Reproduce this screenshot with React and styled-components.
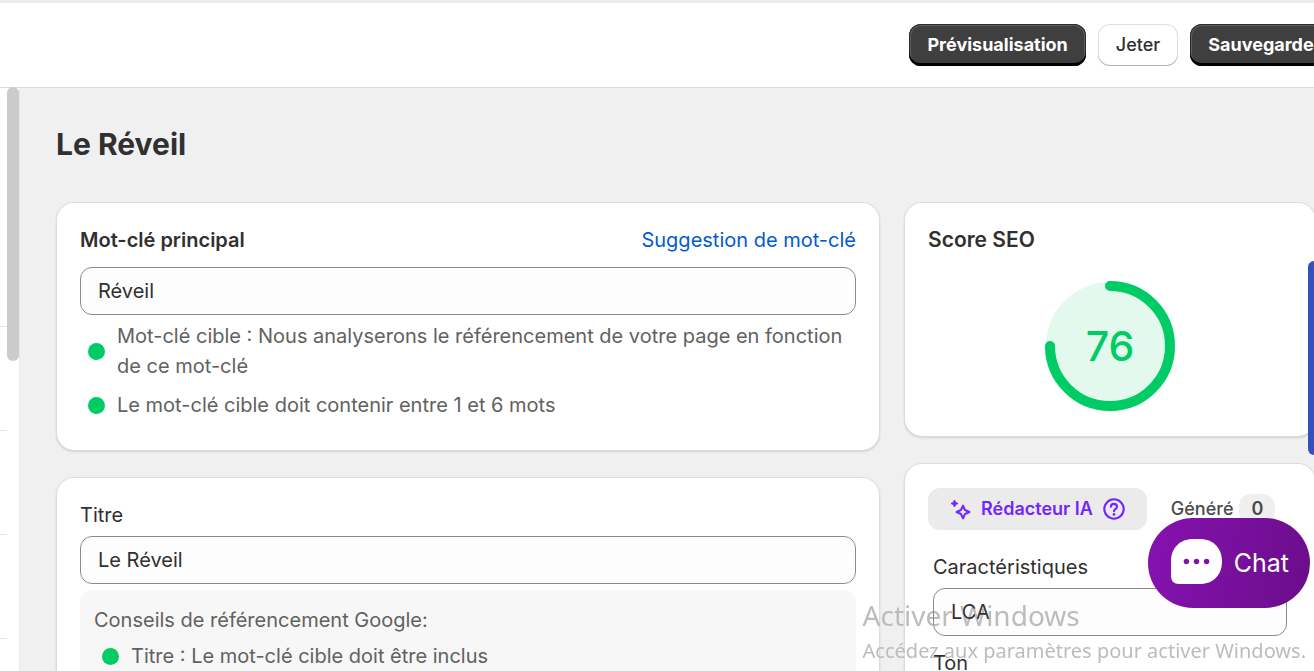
import React from 'react';
import styled, { createGlobalStyle } from 'styled-components';

const GlobalStyle = createGlobalStyle`
  * {
    box-sizing: border-box;
  }
  body {
    margin: 0;
    overflow: hidden;
    background: #f0f0f0;
    color: #303030;
    font-family: Inter, sans-serif;
    font-size: 20px;
    line-height: 30px;
  }
  button, input {
    font: inherit;
    color: inherit;
  }
  h1, h2, ul {
    margin: 0;
    padding: 0;
  }
`;

const Page = styled.div`
  display: flex;
  flex-direction: column;
  height: 100vh;
  overflow: hidden;
`;

const Header = styled.header`
  display: flex;
  flex-shrink: 0;
  justify-content: flex-end;
  gap: 12px;
  height: 88px;
  margin-right: -25px;
  padding: 21px 0;
  background: white;
  border-top: 3px solid #ebebeb;
  border-bottom: 1px solid #dcdcdc;
`;

const HeaderButton = styled.button`
  height: 42px;
  padding: 0 18px;
  border: 0;
  border-radius: 12px;
  font-size: 18px;
  line-height: 24px;
  white-space: nowrap;
  cursor: pointer;
  font-weight: ${props => (props.$primary ? 700 : 500)};
  color: ${props => (props.$primary ? 'white' : '#303030')};
  background: ${props => (props.$primary ? '#3f3f3f' : 'white')};
  box-shadow: ${props => (props.$primary
    ? 'inset 0 -3px 0 #000, inset 0 0 0 1px #2c2c2c, inset 0 0 0 2px #5c5c5c'
    : 'inset 0 -1px 0 #b5b5b5, inset 0 0 0 1px #dedede')};
`;

const Body = styled.div`
  display: flex;
  flex: 1;
  min-height: 0;
`;

const SideNav = styled.nav`
  display: flex;
  flex-shrink: 0;
  width: 19px;
  background: white;
`;

const SideItems = styled.div`
  flex: 1;
`;

const SideItem = styled.div`
  height: ${props => (props.$tall ? 239 : 104)}px;
  border-bottom: 1px solid #e6e6e6;
`;

const ScrollThumb = styled.div`
  width: 12px;
  height: 274px;
  margin-top: -1px;
  border-radius: 6px;
  background: #cbcbcb;
`;

const Main = styled.main`
  flex: 1;
  min-width: 0;
  margin-right: -2px;
  padding: 36px 0 0 36px;
  border-left: 1px solid #e8e8e8;
`;

const PageTitle = styled.h1`
  margin-bottom: 38px;
  font-size: 30px;
  line-height: 40px;
  font-weight: 700;
`;

const Columns = styled.div`
  display: grid;
  grid-template-columns: 2fr 1fr;
  gap: 24px;
`;

const Column = styled.div`
  display: flex;
  flex-direction: column;
  gap: 26px;
  min-width: 0;
`;

const Card = styled.section`
  padding: 23px 24px 26px;
  border-radius: 18px;
  background: white;
  box-shadow: inset 0 0 0 1px #dcdcdc, inset 0 -1px 0 #bdbdbd, 0 1px 2px rgba(0, 0, 0, 0.12);
`;

const CardHead = styled.div`
  display: flex;
  justify-content: space-between;
  margin-bottom: 12px;
`;

const CardTitle = styled.h2`
  font-size: 21px;
  line-height: 30px;
  font-weight: 600;
`;

const FieldTitle = styled.label`
  font-weight: 600;
`;

const SuggestLink = styled.a`
  color: #005bd3;
  text-decoration: none;
`;

const Label = styled.label`
  display: block;
  margin-bottom: 6px;
`;

const TextInput = styled.input`
  display: block;
  width: 100%;
  height: 48px;
  padding: 0 17px;
  border: 1px solid #8a8a8a;
  border-radius: 12px;
  background: #fdfdfd;
`;

const HintList = styled.ul`
  display: flex;
  flex-direction: column;
  gap: 9px;
  margin-top: 6px;
  padding: 0 8px 5px;
  list-style: none;
`;

const HintItem = styled.li`
  display: flex;
  align-items: center;
  gap: 12px;
  color: #616161;
`;

const Bullet = styled.span`
  flex-shrink: 0;
  width: 17px;
  height: 17px;
  border-radius: 50%;
  background: #00cc66;
`;

const Tips = styled.div`
  margin-top: 6px;
  padding: 15px 14px;
  border-radius: 12px;
  background: #f7f7f7;
  color: #616161;
`;

const ScoreWrap = styled.div`
  display: flex;
  justify-content: center;
  padding-top: 14px;
`;

const Ring = styled.svg`
  display: block;
`;

const AiRow = styled.div`
  display: flex;
  align-items: center;
  margin: 2px 0 22px;
`;

const AiButton = styled.button`
  display: flex;
  align-items: center;
  height: 42px;
  padding: 0 22px;
  border: 0;
  border-radius: 12px;
  background: #ebebeb;
  color: #7126ff;
  font-size: 18px;
  font-weight: 600;
  white-space: nowrap;
  cursor: pointer;
  & > svg:first-child {
    margin-right: 9px;
  }
  & > svg:last-child {
    margin-left: 10px;
  }
`;

const Generated = styled.div`
  display: flex;
  align-items: center;
  gap: 6px;
  margin-left: 24px;
  color: #4a4a4a;
  font-size: 18px;
  font-weight: 500;
`;

const Count = styled.span`
  padding: 0 12px;
  border-radius: 12px;
  background: #efefef;
  font-weight: 600;
`;

const Fields = styled.div`
  display: flex;
  flex-direction: column;
  gap: 12px;
  padding: 0 5px;
`;

const SideTab = styled.div`
  position: fixed;
  top: 261px;
  right: 0;
  width: 6px;
  height: 194px;
  border-radius: 8px 0 0 8px;
  background: #3350bd;
`;

const ChatButton = styled.button`
  position: fixed;
  right: 4px;
  bottom: 63px;
  display: flex;
  align-items: center;
  gap: 12px;
  height: 90px;
  padding: 0 21px 0 23px;
  border: 0;
  border-radius: 45px;
  background: linear-gradient(100deg, #8612b0, #6b0d8a);
  color: white;
  font-size: 25px;
  cursor: pointer;
  & > svg {
    margin-bottom: 4px;
  }
`;

const Watermark = styled.div`
  position: fixed;
  right: 8px;
  bottom: 4px;
  color: #bcbcbc;
  font-family: "Noto Sans", "Open Sans", sans-serif;
  font-size: 20px;
  line-height: 32px;
  white-space: nowrap;
  mix-blend-mode: darken;
  pointer-events: none;
`;

const WatermarkTitle = styled.div`
  font-size: 28px;
  line-height: 40px;
`;

const keywordHints = [
  'Mot-clé cible : Nous analyserons le référencement de votre page en fonction de ce mot-clé',
  'Le mot-clé cible doit contenir entre 1 et 6 mots',
];

const titleHints = ['Titre : Le mot-clé cible doit être inclus'];

const Hints = ({ items }) => (
  <HintList>
    {items.map(text => (
      <HintItem key={text}>
        <Bullet />
        <span>{text}</span>
      </HintItem>
    ))}
  </HintList>
);

const ScoreRing = ({ score }) => (
  <Ring width="130" height="130" viewBox="0 0 130 130">
    <circle cx="65" cy="65" r="64" fill="#e3f9ed" />
    <circle
      cx="65"
      cy="65"
      r="60"
      fill="none"
      stroke="#00cc66"
      strokeWidth="10"
      strokeLinecap="round"
      pathLength="100"
      strokeDasharray={`${score - 1} 100`}
      transform="rotate(-90 65 65)"
    />
    <text x="65" y="80" textAnchor="middle" fill="#00cc66" fontSize="41" fontWeight="500">
      {score}
    </text>
  </Ring>
);

const SparkleIcon = () => (
  <svg width="22" height="22" viewBox="0 0 22 22">
    <path
      d="M4.5 2 L5.6 4.4 L8 5.5 L5.6 6.6 L4.5 9 L3.4 6.6 L1 5.5 L3.4 4.4Z"
      fill="currentColor"
      stroke="currentColor"
      strokeLinejoin="round"
    />
    <path
      d="M13 7.6 L15 12 L19.4 14 L15 16 L13 20.4 L11 16 L6.6 14 L11 12Z"
      fill="none"
      stroke="currentColor"
      strokeWidth="2"
      strokeLinejoin="round"
    />
  </svg>
);

const HelpIcon = () => (
  <svg width="22" height="22" viewBox="0 0 22 22" fill="none" stroke="currentColor" strokeWidth="2.1">
    <circle cx="11" cy="11" r="9.7" />
    <path d="M7.9 8.8 C7.9 4.9 14 5 14 8.7 C14 11 11 10.9 11 13.3" strokeLinecap="round" />
    <circle cx="11" cy="16.4" r="1.4" fill="currentColor" stroke="none" />
  </svg>
);

const ChatIcon = () => (
  <svg width="51" height="45" viewBox="0 0 51 45">
    <path
      d="M22 0 H29 C42 0 51 9 51 22.5 C51 36 42 45 29 45 H8 C3 45 0 42 0 37 V22 C0 9 9 0 22 0Z"
      fill="white"
    />
    <g fill="#8012a8">
      <circle cx="15.4" cy="22.5" r="2.7" />
      <circle cx="25.5" cy="22.5" r="2.7" />
      <circle cx="35.6" cy="22.5" r="2.7" />
    </g>
  </svg>
);

class App extends React.Component {
  render() {
    return (
      <Page>
        <GlobalStyle />
        <Header>
          <HeaderButton $primary>Prévisualisation</HeaderButton>
          <HeaderButton>Jeter</HeaderButton>
          <HeaderButton $primary>Sauvegarder</HeaderButton>
        </Header>
        <Body>
          <SideNav>
            <SideItems>
              <SideItem $tall />
              <SideItem />
              <SideItem />
              <SideItem />
            </SideItems>
            <ScrollThumb />
          </SideNav>
          <Main>
            <PageTitle>Le Réveil</PageTitle>
            <Columns>
              <Column>
                <Card>
                  <CardHead>
                    <FieldTitle htmlFor="keyword">Mot-clé principal</FieldTitle>
                    <SuggestLink href="#suggestion">Suggestion de mot-clé</SuggestLink>
                  </CardHead>
                  <TextInput id="keyword" defaultValue="Réveil" />
                  <Hints items={keywordHints} />
                </Card>
                <Card>
                  <Label htmlFor="title">Titre</Label>
                  <TextInput id="title" defaultValue="Le Réveil" />
                  <Tips>
                    Conseils de référencement Google:
                    <Hints items={titleHints} />
                  </Tips>
                </Card>
              </Column>
              <Column>
                <Card>
                  <CardHead>
                    <CardTitle>Score SEO</CardTitle>
                  </CardHead>
                  <ScoreWrap>
                    <ScoreRing score={76} />
                  </ScoreWrap>
                </Card>
                <Card>
                  <AiRow>
                    <AiButton>
                      <SparkleIcon />
                      Rédacteur IA
                      <HelpIcon />
                    </AiButton>
                    <Generated>
                      Généré
                      <Count>0</Count>
                    </Generated>
                  </AiRow>
                  <Fields>
                    <div>
                      <Label htmlFor="features">Caractéristiques</Label>
                      <TextInput id="features" defaultValue="LCA" />
                    </div>
                    <div>
                      <Label htmlFor="tone">Ton</Label>
                      <TextInput id="tone" />
                    </div>
                  </Fields>
                </Card>
              </Column>
            </Columns>
          </Main>
        </Body>
        <SideTab />
        <ChatButton>
          <ChatIcon />
          Chat
        </ChatButton>
        <Watermark>
          <WatermarkTitle>Activer Windows</WatermarkTitle>
          Accédez aux paramètres pour activer Windows.
        </Watermark>
      </Page>
    );
  }
}

export default App;
